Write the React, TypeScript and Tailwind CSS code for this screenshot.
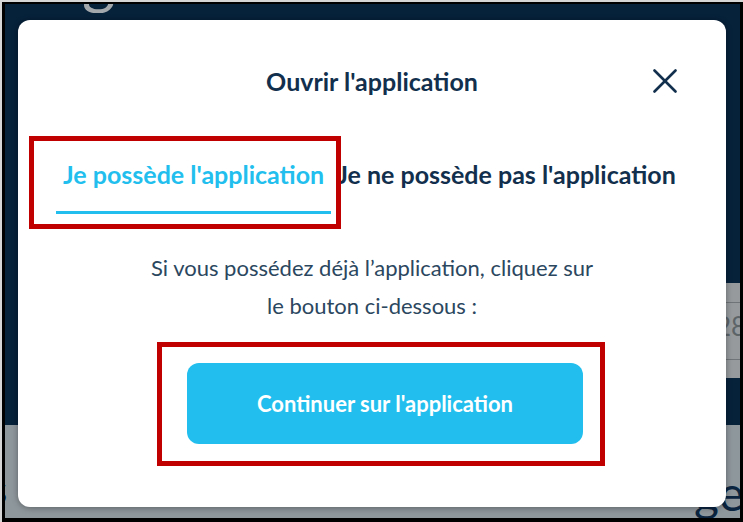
import React from "react";

const font = { fontFamily: "Lato, 'Open Sans', sans-serif" };

function CloseIcon() {
  return (
    <svg width="24" height="24" viewBox="0 0 24 24" fill="none" stroke="#12304d" strokeWidth="2.6" strokeLinecap="round">
      <path d="M1.5 1.5 L22.5 22.5" />
      <path d="M22.5 1.5 L1.5 22.5" />
    </svg>
  );
}

function Modal() {
  return (
    <div className="absolute left-[13px] top-[16px] flex h-[487px] w-[708px] flex-col items-center rounded-[12px] bg-white pt-[47px] shadow-[0_1px_6px_rgba(0,0,0,0.35)]">
      <div className="grid w-full grid-cols-[1fr_auto_1fr] items-center">
        <div />
        <h2 className="text-[25px] font-bold leading-[28px] text-[#12304d]">Ouvrir l'application</h2>
        <div className="flex justify-end pr-[49px]">
          <button className="flex h-[28px] w-[24px] items-center">
            <CloseIcon />
          </button>
        </div>
      </div>

      <div className="relative mt-[65px] flex w-full justify-start pl-[38px]">
        <div className="border-b-[3px] border-[#22bfee] px-[7px] pb-[23px] text-[25px] font-bold leading-[28px] text-[#22bfee]">
          Je possède l'application
        </div>
        <div className="px-[6px] pb-[23px] text-[25px] font-bold leading-[28px] text-[#12304d]">
          Je ne possède pas l'application
        </div>
        <div className="absolute left-[11px] top-[-24px] h-[93px] w-[312px] border-[5px] border-[#c00000]" />
      </div>

      <p className="mt-[35px] w-[452px] text-center text-[22px] leading-[38px] text-[#2b4760]">
        Si vous possédez déjà l’application, cliquez sur le bouton ci-dessous :
      </p>

      <div className="relative ml-[26px] mt-[38px]">
        <button className="h-[81px] w-[396px] rounded-[12px] bg-[#22bfee] text-[22px] font-bold text-white">
          Continuer sur l'application
        </button>
        <div className="absolute left-[-30px] top-[-21px] h-[124px] w-[448px] border-[5px] border-[#c00000]" />
      </div>
    </div>
  );
}

export default function App() {
  return (
    <div className="h-[522px] w-[743px] bg-[#d6d6d6] pl-[2px] pt-[2px]" style={font}>
      <div className="h-[520px] w-[741px] border-b-[4px] border-l-[3px] border-r-[3px] border-t-[2px] border-black">
        <div className="relative h-full w-full overflow-hidden bg-[#8e979c]">
          <div className="flex h-[421px] flex-col bg-[#06213a]">
            <div className="h-[9px] overflow-hidden pl-[77px]">
              <span className="-mt-[58px] block text-[64px] leading-none text-[#a3a8ac]">g</span>
            </div>
            <div className="ml-auto mt-[270px] flex h-[95px] w-[30px] flex-col bg-[#969a9c]">
              <div className="mt-[19px] h-[1px] bg-[#6f7478]" />
              <div className="pl-[6px] pt-[8px] text-[26px] leading-[30px] text-[#5d6468]">28</div>
              <div className="mt-[18px] h-[1px] bg-[#6f7478]" />
            </div>
          </div>
          <div className="flex items-start justify-between pt-[44px]">
            <span className="-ml-[15px] text-[40px] leading-[40px] text-[#0a2440]">s</span>
            <span className="-mr-[4px] text-[48px] leading-[48px] text-[#0a2440]">ge</span>
          </div>
          <Modal />
        </div>
      </div>
    </div>
  );
}
